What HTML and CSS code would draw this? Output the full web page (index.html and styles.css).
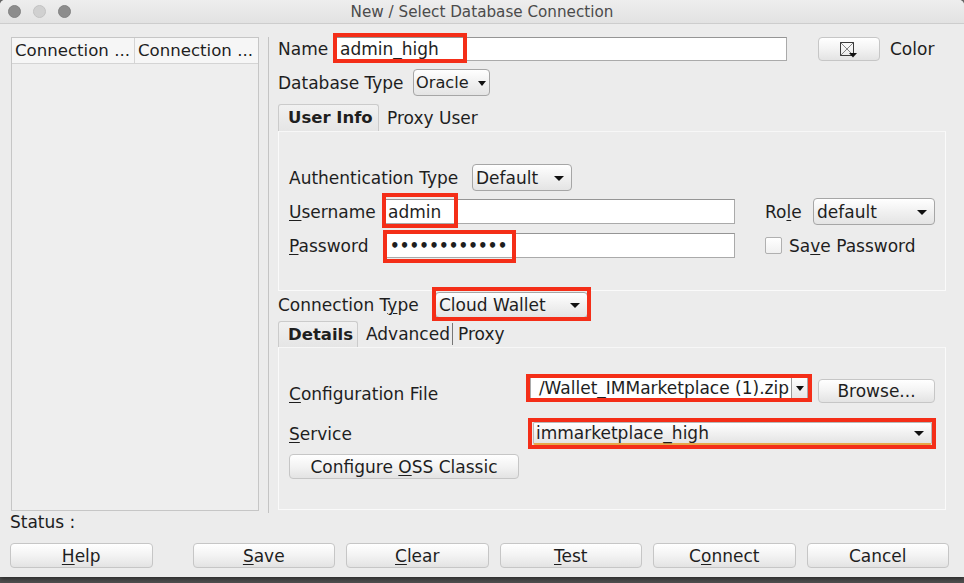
FILE: index.html
```html
<!DOCTYPE html>
<html>
<head>
<meta charset="utf-8">
<title>New / Select Database Connection</title>
<link rel="stylesheet" href="styles.css">
</head>
<body>
<div class="window">
  <div class="titlebar">
    <div class="lights"><span class="light dark"></span><span class="light"></span><span class="light dark"></span></div>
    <div class="title">New / Select Database Connection</div>
    <div></div>
  </div>
  <div class="main">
    <div class="left">
      <div class="thead"><div class="th">Connection ...</div><div class="th">Connection ...</div></div>
    </div>
    <div class="divider"></div>
    <div class="right">
      <div class="row row-name">
        <div class="lbl w-name">Name</div>
        <div class="input name-input"><span class="val">admin_high</span><span class="mark mark-name"></span></div>
        <div class="btn color-btn">
          <svg width="20" height="17" viewBox="0 0 20 17"><rect x="1.5" y="1.5" width="13" height="13" fill="none" stroke="#3a3a3a"/><path d="M1.5 1.5 L14.5 14.5 M14.5 1.5 L1.5 14.5" stroke="#666" stroke-width="0.8"/><path d="M10 12 h8 l-4 4.5z" fill="#111"/></svg>
        </div>
        <div class="lbl color-lbl">Color</div>
      </div>
      <div class="row row-db">
        <div class="lbl w-db">Database Type</div>
        <div class="select sel-oracle"><span>Oracle</span><span class="tri"></span></div>
      </div>
      <div class="tabs tabs1">
        <div class="tab active tab-user">User Info</div>
        <div class="tab tab-proxyuser">Proxy User</div>
      </div>
      <div class="panel panel1">
        <div class="row row-auth">
          <div class="lbl w-auth">Authentication Type</div>
          <div class="select sel-default"><span>Default</span><span class="tri"></span></div>
        </div>
        <div class="row row-user">
          <div class="lbl w-user"><u>U</u>sername</div>
          <div class="input user-input"><span class="val">admin</span><span class="mark mark-user"></span></div>
          <div class="lbl w-role">Ro<u>l</u>e</div>
          <div class="select sel-role"><span>default</span><span class="tri"></span></div>
        </div>
        <div class="row row-pass">
          <div class="lbl w-pass"><u>P</u>assword</div>
          <div class="input pass-input"><span class="val dots">&#8226;&#8226;&#8226;&#8226;&#8226;&#8226;&#8226;&#8226;&#8226;&#8226;&#8226;&#8226;</span><span class="mark mark-pass"></span></div>
          <div class="checkbox"></div>
          <div class="lbl save-lbl">Sa<u>v</u>e Password</div>
        </div>
      </div>
      <div class="row row-ctype">
        <div class="lbl w-ctype">Connection T<u>y</u>pe</div>
        <div class="select sel-cloud"><span>Cloud Wallet</span><span class="tri"></span><span class="mark mark-ctype"></span></div>
      </div>
      <div class="tabs tabs2">
        <div class="tab active tab-details">Details</div>
        <div class="tab tab-adv">Advanced</div>
        <div class="tab tab-proxy">Proxy</div>
      </div>
      <div class="panel panel2">
        <div class="row row-config">
          <div class="lbl w-config"><u>C</u>onfiguration File</div>
          <div class="combo config-combo">
            <div class="combo-text"><span>/Wallet_IMMarketplace (1).zip</span></div>
            <div class="combo-arrow"><span class="tri"></span></div>
            <span class="mark mark-config"></span>
          </div>
          <div class="btn browse-btn"><span>Browse...</span></div>
        </div>
        <div class="row row-service">
          <div class="lbl w-service"><u>S</u>ervice</div>
          <div class="select sel-service"><span>immarketplace_high</span><span class="tri"></span><span class="mark mark-service"></span></div>
        </div>
        <div class="btn oss-btn"><span>Configure <u>O</u>SS Classic</span></div>
      </div>
    </div>
  </div>
  <div class="status">Status :</div>
  <div class="buttons">
    <div class="btn bbtn btn-help"><span><u>H</u>elp</span></div>
    <div class="btn bbtn"><span><u>S</u>ave</span></div>
    <div class="btn bbtn"><span><u>C</u>lear</span></div>
    <div class="btn bbtn"><span><u>T</u>est</span></div>
    <div class="btn bbtn"><span>C<u>o</u>nnect</span></div>
    <div class="btn bbtn"><span>Cancel</span></div>
  </div>
</div>
</body>
</html>
```

FILE: styles.css
```css
* { box-sizing: border-box; }
html, body { margin: 0; padding: 0; }
body {
  width: 964px;
  height: 583px;
  overflow: hidden;
  background: linear-gradient(#6a6a6a, #4e4e4e);
  font-family: "DejaVu Sans", "Liberation Sans", sans-serif;
  font-size: 17px;
  color: #1e1e1e;
}
.window {
  width: 964px;
  height: 577px;
  background: #ececec;
  border-radius: 5px 5px 0 0;
  overflow: hidden;
  box-shadow: 0 2px 4px rgba(0,0,0,0.45);
}
.titlebar {
  height: 24px;
  display: grid;
  grid-template-columns: 1fr auto 1fr;
  align-items: center;
  background: linear-gradient(#eeeeee, #e2e2e2);
  border-bottom: 1px solid #cdcdcd;
}
.lights { display: flex; gap: 12px; padding-left: 8px; }
.light {
  width: 13px; height: 13px; border-radius: 50%;
  background: #d0d0d0;
  border: 1px solid #c2c2c2;
}
.light.dark { background: #8d8d8d; border-color: #838383; }
.title {
  font-size: 15.2px;
  color: #4b4b4b;
  padding-top: 1px;
}

.main {
  display: flex;
  padding: 13px 0 0 11px;
  height: 488px;
}
.left {
  width: 248px;
  height: 474px;
  border: 1px solid #c6c6c6;
  background: #eeeeee;
}
.thead {
  display: flex;
  height: 26px;
  background: #f6f6f6;
  border-bottom: 1px solid #d4d4d4;
}
.th {
  width: 123px;
  padding-left: 3px;
  line-height: 25px;
  font-size: 16.6px;
  white-space: nowrap;
  overflow: hidden;
  border-right: 1px solid #d4d4d4;
}
.th:last-child { border-right: none; }
.divider {
  width: 1px;
  height: 476px;
  margin-left: 9px;
  background: #c4c4c4;
}
.right {
  margin-left: 9px;
  width: 668px;
}

.row { display: flex; align-items: center; }
.lbl { white-space: nowrap; flex: none; }
u { text-decoration-thickness: 1px; text-underline-offset: 2px; }

.input {
  position: relative;
  background: #ffffff;
  border: 1px solid #aaaaaa;
  border-top-color: #959595;
  display: flex;
  align-items: center;
  padding-left: 4px;
  flex: none;
}
.mark {
  position: absolute;
  border: 4px solid #f42e18;
  pointer-events: none;
}

.select {
  position: relative;
  flex: none;
  display: flex;
  align-items: center;
  padding-left: 3px;
  border: 1px solid #a6a6a6;
  border-radius: 4px;
  background: linear-gradient(#ffffff, #f1f1f1 50%, #e4e4e4);
  white-space: nowrap;
}
.tri {
  position: absolute;
  right: 7px;
  top: 50%;
  margin-top: -2px;
  width: 0; height: 0;
  border-left: 5px solid transparent;
  border-right: 5px solid transparent;
  border-top: 5px solid #111;
}

.btn {
  flex: none;
  display: flex;
  align-items: center;
  justify-content: center;
  border: 1px solid #c6c6c6;
  border-radius: 4px;
  background: linear-gradient(#ffffff, #f3f3f3 50%, #e3e3e3);
  white-space: nowrap;
}

/* Name row */
.row-name { height: 24px; }
.w-name { width: 57px; }
.name-input { width: 452px; height: 24px; }
.mark-name { left: -3px; top: -5px; width: 134px; height: 30px; }
.color-btn { margin-left: 31px; width: 62px; height: 24px; padding-top: 1px; }
.color-lbl { margin-left: 10px; }

.row-db { margin-top: 8px; height: 27px; }
.w-db { width: 135px; }
.sel-oracle { width: 77px; height: 27px; font-size: 16.2px; padding-left: 2px; }
.sel-oracle .tri { right: 3px; border-left-width: 4px; border-right-width: 4px; }

/* tabs */
.tabs { display: flex; align-items: flex-end; }
.tabs1 { margin-top: 8px; height: 27px; }
.tab { white-space: nowrap; line-height: 25px; }
.tab.active {
  height: 27px;
  border: 1px solid #cbcbcb;
  border-bottom: none;
  border-radius: 3px 3px 0 0;
  background: linear-gradient(#f1f1f1, #e5e5e5);
  font-weight: bold;
  padding-left: 9px;
}
.tab-user { width: 101px; font-size: 16.5px; }
.tab-proxyuser { padding-left: 8px; }

.panel {
  border: 1px solid #fafafa;
  border-top-color: #f7f7f7;
}
.panel1 { height: 160px; padding: 32px 0 0 10px; }

.row-auth { height: 27px; }
.w-auth { width: 183px; }
.sel-default { width: 100px; height: 27px; }

.row-user { margin-top: 7px; height: 27px; }
.w-user { width: 94px; }
.user-input { width: 352px; height: 25px; }
.mark-user { left: -2px; top: -7px; width: 76px; height: 35px; }
.w-role { margin-left: 30px; width: 48px; }
.sel-role { width: 122px; height: 27px; }

.row-pass { margin-top: 7px; height: 27px; }
.w-pass { width: 94px; }
.pass-input { width: 352px; height: 25px; }
.dots { font-weight: bold; letter-spacing: 0.2px; padding-left: 2px; font-size: 15px; }
.mark-pass { left: -1px; top: -4px; width: 133px; height: 33px; }
.checkbox {
  margin-left: 30px;
  width: 17px;
  height: 17px;
  border: 1px solid #b0b0b0;
  border-radius: 2px;
  background: linear-gradient(#ffffff, #f0f0f0);
}
.save-lbl { margin-left: 7px; }

/* connection type */
.row-ctype { height: 28px; }
.w-ctype { width: 157px; }
.sel-cloud { width: 153px; height: 26px; }
.mark-ctype { left: -4px; top: -6px; right: -4px; bottom: -4px; }

.tabs2 { margin-top: 2px; height: 26px; }
.tab-details { width: 80px; height: 26px !important; font-size: 16.5px; }
.tab-adv { padding-left: 8px; padding-right: 2px; border-right: 1px solid #777; line-height: 22px; margin-bottom: 2px; }
.tab-proxy { padding-left: 5px; }

.panel2 { height: 163px; padding: 28px 0 0 10px; }
.row-config { align-items: flex-start; height: 24px; }
.w-config { width: 241px; padding-top: 8px; }
.config-combo {
  position: relative;
  display: flex;
  width: 278px;
  height: 24px;
  background: #fff;
  border: 1px solid #aaaaaa;
  flex: none;
}
.combo-text {
  flex: 1;
  display: flex;
  justify-content: flex-end;
  overflow: hidden;
  white-space: nowrap;
  align-items: center;
  padding-right: 2px;
}
.combo-text span { flex: none; }
.combo-arrow {
  position: relative;
  width: 16px;
  border-left: 1px solid #9a9a9a;
  background: linear-gradient(#ffffff, #e6e6e6);
}
.combo-arrow .tri { right: 3px; border-left-width: 4px; border-right-width: 4px; }
.mark-config { left: -5px; top: -3px; right: -5px; bottom: -3px; }
.browse-btn { margin-left: 10px; margin-top: 3px; width: 117px; height: 24px; }

.row-service { margin-top: 22px; height: 23px; }
.w-service { width: 244px; }
.sel-service {
  width: 399px;
  height: 23px;
  border-radius: 2px;
  border-color: #b9b9b9;
  border-bottom: 2px solid #e7a748;
  padding-left: 2px;
}
.mark-service { left: -6px; top: -5px; right: -5px; bottom: -6px; }

.oss-btn { margin-top: 9px; width: 230px; height: 25px; }

.status { margin-top: 0; padding-left: 10px; height: 20px; line-height: 20px; }

.buttons {
  display: flex;
  gap: 11px;
  padding-left: 10px;
  margin-top: 11px;
}
.bbtn { width: 142.5px; height: 25px; }
.btn-help { margin-right: 29px; }
```
